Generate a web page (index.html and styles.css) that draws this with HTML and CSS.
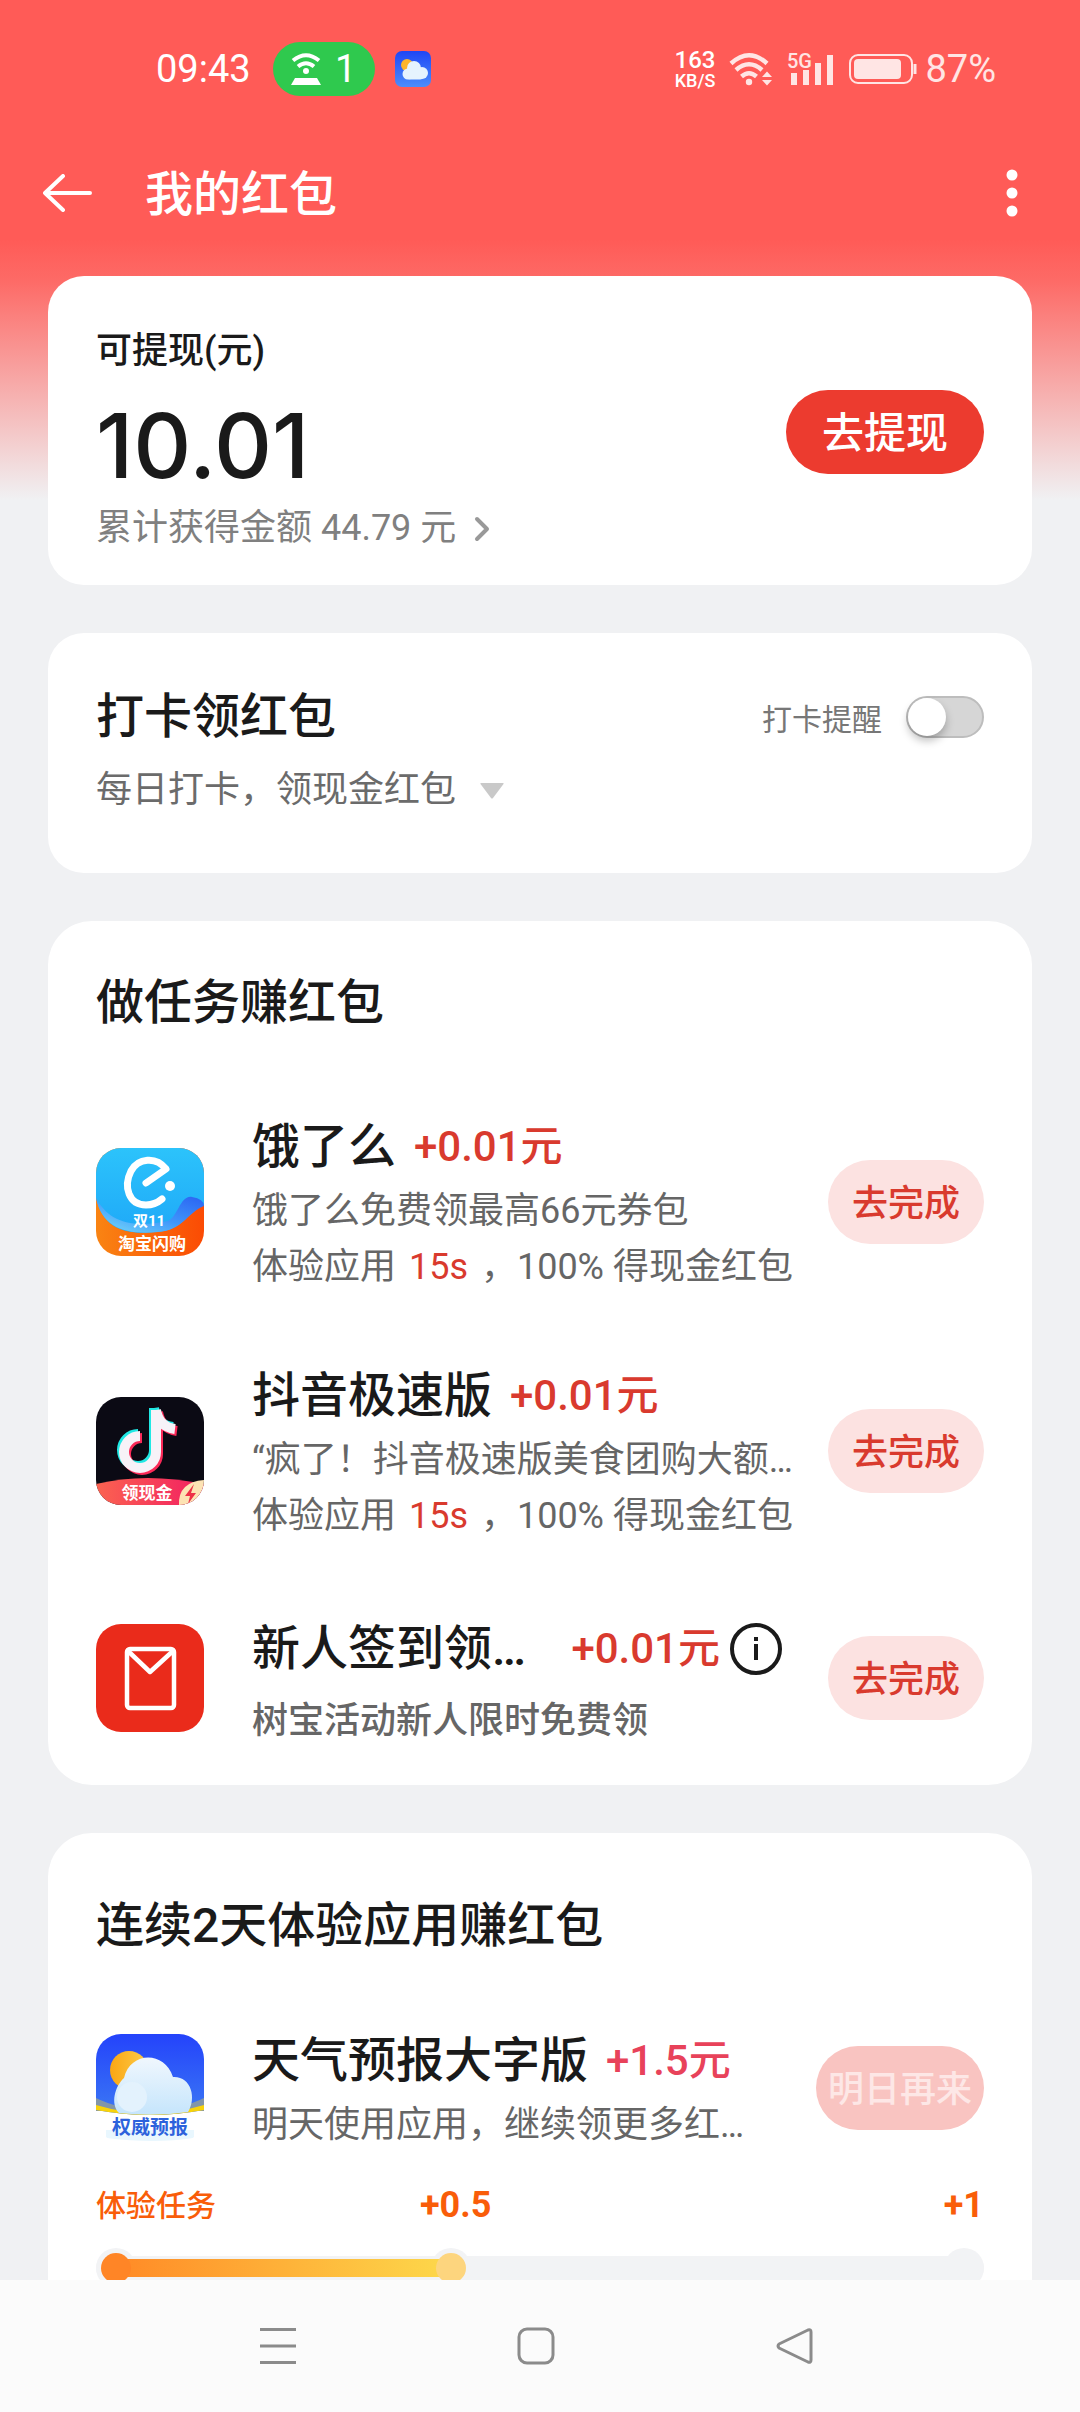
FILE: index.html
```html
<!DOCTYPE html>
<html lang="zh-CN">
<head>
<meta charset="utf-8">
<meta name="viewport" content="width=device-width, initial-scale=1">
<title>我的红包</title>
<link rel="stylesheet" href="styles.css">
</head>
<body>
<div class="screen">
  <div class="status-bar">
    <div class="status-left">
      <span class="clock">09:43</span>
      <span class="hotspot">
        <svg width="30" height="32" viewBox="0 0 30 32" fill="none" stroke="#fff" stroke-width="4">
          <path d="M2 7.500Q15-3 28 7.500M7 13.500Q15 7 23 13.500"/>
          <circle cx="15" cy="18" r="3" fill="#fff" stroke="none"/>
          <path d="M4 25h22l4 7H0z" fill="#fff" stroke="none"/>
        </svg>
        <span>1</span>
      </span>
      <svg class="mini-app" width="36" height="36" viewBox="0 0 36 36">
        <defs><linearGradient id="mini" x2="0" y2="1"><stop stop-color="#1f46f5"/><stop offset="1" stop-color="#4c8dfb"/></linearGradient></defs>
        <rect width="36" height="36" rx="7" fill="url(#mini)"/>
        <circle cx="12" cy="14" r="6" fill="#fdb52b"/>
        <g fill="#e6f3fe"><circle cx="19" cy="17" r="7"/><circle cx="13" cy="23" r="5.500"/><circle cx="27" cy="22" r="6"/><rect x="12" y="20" width="16" height="8.500" rx="3"/></g>
      </svg>
    </div>
    <div class="status-right">
      <span class="speed"><b>163</b><small>KB/S</small></span>
      <svg width="44" height="34" viewBox="0 0 44 34" fill="none" stroke="#ffe5e4" stroke-width="4.500">
        <path d="M2 11.500Q20-5 38 11.500M7 18Q20 6.500 33 18M12.500 24.500Q20 18 27.500 24.500"/>
        <circle cx="20" cy="30" r="3.200" fill="#ffe5e4" stroke="none"/>
        <path d="M33 25l5-5.500 5 5.500zM33 28h10l-5 5.500z" fill="#ffe5e4" stroke="none"/>
      </svg>
      <svg width="48" height="42" viewBox="0 0 48 42" fill="#ffe5e4">
        <text class="net" x="0" y="20">5G</text>
        <rect x="4" y="25" width="6" height="12"/><rect x="16" y="22" width="6" height="15"/><rect x="28" y="15" width="6" height="22"/><rect x="40" y="7" width="6" height="30"/>
      </svg>
      <svg width="68" height="32" viewBox="0 0 68 32" fill="none" stroke="#ffe5e4" stroke-width="2">
        <rect x="1" y="2" width="62" height="28" rx="8"/>
        <rect x="5" y="6" width="47" height="20" rx="4" fill="#ffe5e4" stroke="none"/>
        <path d="M66 11v10" stroke-width="3"/>
      </svg>
      <span class="battery">87%</span>
    </div>
  </div>

  <header class="app-bar">
    <button class="icon-button" aria-label="返回">
      <svg width="50" height="38" viewBox="0 0 50 38" fill="none" stroke="#fff" stroke-width="4" stroke-linecap="round" stroke-linejoin="round"><path d="M20 2L2 19l18 17M3 19h44"/></svg>
    </button>
    <h1 class="page-title">我的红包</h1>
    <button class="icon-button" aria-label="更多">
      <svg width="12" height="50" viewBox="0 0 12 50" fill="#fff"><circle cx="6" cy="7" r="5.500"/><circle cx="6" cy="25" r="5.500"/><circle cx="6" cy="43" r="5.500"/></svg>
    </button>
  </header>

  <main class="content">
    <section class="card balance">
      <div class="balance-info">
        <p class="balance-label">可提现(元)</p>
        <p class="balance-amount">10.01</p>
        <a class="balance-total" href="#total">累计获得金额 44.79 元
          <svg width="16" height="26" viewBox="0 0 16 26" fill="none" stroke="#999" stroke-width="4" stroke-linecap="round" stroke-linejoin="round"><path d="M3 3l10 10L3 23"/></svg>
        </a>
      </div>
      <button class="button button-primary">去提现</button>
    </section>

    <section class="card checkin">
      <div class="checkin-head">
        <h2 class="card-title">打卡领红包</h2>
        <label class="remind">打卡提醒<input class="switch" type="checkbox" role="switch"></label>
      </div>
      <p class="checkin-text">每日打卡，领现金红包
        <svg width="24" height="16" viewBox="0 0 24 16"><path d="M1 0h22q1 0 .5 1L13 15q-1 1-2 0L.5 1Q0 0 1 0z" fill="#c9c9c9"/></svg>
      </p>
    </section>

    <section class="card tasks">
      <h2 class="card-title">做任务赚红包</h2>
      <ul class="task-list">
        <li class="task">
          <svg class="task-icon" width="108" height="108" viewBox="0 0 108 108">
            <defs>
              <linearGradient id="sky" x2="0" y2="1"><stop stop-color="#2cc3fb"/><stop offset="1" stop-color="#1fa9f8"/></linearGradient>
              <linearGradient id="fold" x1="1" y1="0" x2="0" y2="1"><stop stop-color="#2b62f2"/><stop offset=".5" stop-color="#3f97fb"/><stop offset="1" stop-color="#7be0f8"/></linearGradient>
              <linearGradient id="flame" x2="1" y2="0"><stop stop-color="#f98413"/><stop offset="1" stop-color="#fb4b04"/></linearGradient>
              <clipPath id="tile"><rect width="108" height="108" rx="25"/></clipPath>
            </defs>
            <g clip-path="url(#tile)">
              <rect width="108" height="108" fill="url(#flame)"/>
              <path d="M0 0h108v57C92 62 88 83 60 84 30 87 8 82 0 50z" fill="url(#sky)"/>
              <path d="M0 50c12 22 32 31 72 23 10-4 12-26 24-24q12 2 12 9C92 64 86 83 62 84 30 87 6 80 0 50z" fill="url(#fold)"/>
              <path d="M50 35L70 21C60 8 42 10 35 23c-8 16-2 34 15 34q9 0 16-6" fill="none" stroke="#fff" stroke-width="7" stroke-linecap="round" stroke-linejoin="round"/>
              <circle cx="74" cy="38" r="5" fill="#fff"/>
              <text class="logo-text" x="53" y="78" font-size="15">双11</text>
              <text class="logo-text" x="56" y="102" font-size="17">淘宝闪购</text>
            </g>
          </svg>
          <div class="task-body">
            <div class="task-head"><h3 class="task-name">饿了么</h3><span class="reward">+0.01元</span></div>
            <p class="task-text">饿了么免费领最高66元券包</p>
            <p class="task-text">体验应用 <em>15s</em> ，100% 得现金红包</p>
          </div>
          <button class="button button-soft">去完成</button>
        </li>
        <li class="task">
          <svg class="task-icon" width="108" height="108" viewBox="0 0 108 108">
            <defs><linearGradient id="ribbon"><stop stop-color="#fb6350"/><stop offset="1" stop-color="#f21e62"/></linearGradient></defs>
            <g clip-path="url(#tile)">
              <rect width="108" height="108" fill="#0b0a14"/>
              <g fill="none" stroke-width="10">
                <path d="M58 11v42a16 16 0 1 1-16-16M58 11q3 17 19 19" stroke="#21e8e4"/>
                <path d="M62 15v42a16 16 0 1 1-16-16M62 15q3 17 19 19" stroke="#fb2958"/>
                <path d="M60 13v42a16 16 0 1 1-16-16M60 13q3 17 19 19" stroke="#f7f2f8"/>
              </g>
              <path d="M0 87Q50 75 108 87v21H0z" fill="url(#ribbon)"/>
              <path d="M83 108q-1-23 25-25v25z" fill="#fde3b4"/>
              <path d="M98 87l-9 12h5l-2 8 8-11h-5z" fill="#ee3148"/>
              <text class="logo-text" x="51" y="102" font-size="17">领现金</text>
            </g>
          </svg>
          <div class="task-body">
            <div class="task-head"><h3 class="task-name">抖音极速版</h3><span class="reward">+0.01元</span></div>
            <p class="task-text">“疯了！抖音极速版美食团购大额…</p>
            <p class="task-text">体验应用 <em>15s</em> ，100% 得现金红包</p>
          </div>
          <button class="button button-soft">去完成</button>
        </li>
        <li class="task task-compact">
          <svg class="task-icon" width="108" height="108" viewBox="0 0 108 108">
            <rect width="108" height="108" rx="25" fill="#ea2b1b"/>
            <g fill="none" stroke="#fff" stroke-width="4.500" stroke-linejoin="round"><rect x="31" y="25" width="47" height="59" rx="3"/><path d="M32 27l22 21 23-21"/></g>
          </svg>
          <div class="task-body">
            <div class="task-head">
              <h3 class="task-name">新人签到领…</h3><span class="reward">+0.01元</span>
              <button class="info" aria-label="说明">
                <svg width="52" height="52" viewBox="0 0 52 52" fill="#1a1a1a"><circle cx="26" cy="26" r="24" fill="none" stroke="#1a1a1a" stroke-width="4"/><rect x="24" y="21" width="4" height="16"/><rect x="24" y="14" width="4" height="4"/></svg>
              </button>
            </div>
            <p class="task-text">树宝活动新人限时免费领</p>
          </div>
          <button class="button button-soft">去完成</button>
        </li>
      </ul>
    </section>

    <section class="card streak">
      <h2 class="card-title">连续2天体验应用赚红包</h2>
      <div class="task">
        <svg class="task-icon" width="108" height="108" viewBox="0 0 108 108">
          <defs>
            <linearGradient id="blue" x2="0" y2="1"><stop stop-color="#2443fb"/><stop offset="1" stop-color="#3b78f4"/></linearGradient>
            <linearGradient id="cloud" x2="0" y2="1"><stop stop-color="#f0f7fd"/><stop offset="1" stop-color="#c5e5fc"/></linearGradient>
            <linearGradient id="sun"><stop stop-color="#fba613"/><stop offset="1" stop-color="#fbcc4b"/></linearGradient>
          </defs>
          <g clip-path="url(#tile)">
            <rect width="108" height="108" fill="#fff"/>
            <path d="M0 0h108v76Q54 86 0 76z" fill="url(#blue)"/>
            <path d="M0 64q20 10 54 14 34-4 54-14v13H0z" fill="#8296a8"/>
            <path d="M0 71q54 16 108 0v5q-54 10-108 0z" fill="#f8d30b"/>
            <circle cx="33" cy="36" r="19" fill="url(#sun)"/>
            <path d="M23 79C14 70 19 52 28 44 34 18 68 16 77 43 95 42 101 64 92 78q-34 5-69 1z" fill="url(#cloud)"/>
            <circle cx="36" cy="63" r="15" fill="#e3f2fd"/>
            <path d="M10 96h88v8q-40 6-88 0z" fill="#e9f7fe"/>
            <text class="logo-text logo-blue" x="54" y="100" font-size="19">权威预报</text>
          </g>
        </svg>
        <div class="task-body">
          <div class="task-head"><h3 class="task-name">天气预报大字版</h3><span class="reward reward-pink">+1.5元</span></div>
          <p class="task-text">明天使用应用，继续领更多红…</p>
        </div>
        <button class="button button-disabled" disabled>明日再来</button>
      </div>
      <div class="steps">
        <span class="step-name">体验任务</span><span class="step-mid">+0.5</span><span class="step-end">+1</span>
      </div>
      <div class="track">
        <i class="halo halo-start"></i><i class="halo halo-mid"></i><i class="halo halo-end"></i>
        <i class="fill"></i><i class="knob knob-start"></i><i class="knob knob-mid"></i>
      </div>
    </section>
  </main>

  <nav class="nav-bar">
    <button class="icon-button" aria-label="最近任务"><svg width="38" height="38" viewBox="0 0 38 38" stroke="#8b8b8b" stroke-width="3"><path d="M1 2.500h36M1 19h36M1 35.500h36"/></svg></button>
    <button class="icon-button" aria-label="主屏幕"><svg width="38" height="38" viewBox="0 0 38 38" fill="none" stroke="#8b8b8b" stroke-width="3"><rect x="2" y="2" width="34" height="34" rx="8"/></svg></button>
    <button class="icon-button" aria-label="返回上一页"><svg width="38" height="38" viewBox="0 0 38 38" fill="none" stroke="#8b8b8b" stroke-width="3" stroke-linejoin="round"><path d="M33 3L4 17q-2 2 0 4l29 14q3 1 3-2V5q0-3-3-2z"/></svg></button>
  </nav>
</div>
</body>
</html>
```
FILE: styles.css
```css
* {
  box-sizing: border-box;
  margin: 0;
  padding: 0;
}

body {
  font-family: Roboto, "Noto Sans CJK SC", sans-serif;
  color: #1a1a1a;
}

button {
  border: 0;
  background: none;
  font: inherit;
}

svg {
  display: block;
  flex: none;
}

.screen {
  display: flex;
  flex-direction: column;
  height: 100vh;
  background: linear-gradient(#ff5b57 240px, #fd6a66 280px, #f0f1f3 500px);
}

/* status bar */
.status-bar {
  display: flex;
  flex: none;
  justify-content: space-between;
  align-items: center;
  height: 138px;
  padding: 0 84px 0 156px;
  color: #fff;
  font-size: 38px;
}

.status-left,
.status-right {
  display: flex;
  align-items: center;
}

.clock {
  margin-right: 22px;
}

.hotspot {
  display: flex;
  align-items: center;
  justify-content: center;
  gap: 14px;
  width: 102px;
  height: 54px;
  margin-right: 20px;
  border-radius: 27px;
  background: #2fc94e;
}

.status-right {
  gap: 14px;
}

.speed {
  display: flex;
  flex-direction: column;
  align-items: center;
  font-weight: 500;
}

.speed b {
  font-size: 24px;
  font-weight: 500;
  line-height: 24px;
}

.speed small {
  font-size: 18px;
  line-height: 18px;
}

.net {
  font-size: 20px;
  font-weight: 500;
}

.battery {
  margin-left: -6px;
  color: #ffe5e4;
}

/* app bar */
.app-bar {
  display: flex;
  flex: none;
  align-items: center;
  height: 110px;
  padding: 0 62px 0 43px;
}

.page-title {
  flex: 1;
  margin-left: 52px;
  padding-top: 4px;
  color: #fff;
  font-size: 48px;
  font-weight: 500;
  line-height: 64px;
}

/* cards */
.content {
  display: flex;
  flex: 1;
  flex-direction: column;
  gap: 48px;
  min-height: 0;
  padding: 28px 48px 0;
  overflow: auto;
  scrollbar-width: none;
}

.card {
  flex: none;
  padding: 0 48px;
  border-radius: 36px;
  background: #fff;
}

.card-title {
  font-size: 48px;
  font-weight: 500;
  line-height: 64px;
}

.button {
  flex: none;
  height: 84px;
  padding-bottom: 4px;
  border-radius: 42px;
  font-size: 36px;
  font-weight: 500;
  text-align: center;
}

.button-primary {
  width: 198px;
  background: #ec3b2f;
  color: #fff;
  font-size: 42px;
}

.button-soft {
  width: 156px;
  background: #fce2e1;
  color: #d93a2e;
}

.button-disabled {
  width: 168px;
  background: #f9c4c1;
  color: #fde7e6;
}

.balance {
  display: flex;
  align-items: center;
  justify-content: space-between;
  padding: 36px 48px 34px;
}

.balance-label {
  font-size: 36px;
  font-weight: 500;
  line-height: 78px;
}

.balance-amount {
  margin: 8px 0 12px;
  font-family: Inter, Roboto, sans-serif;
  font-size: 90px;
  font-weight: 500;
  line-height: 96px;
}

.balance-total {
  display: flex;
  align-items: center;
  gap: 18px;
  color: #808080;
  font-size: 36px;
  line-height: 45px;
  text-decoration: none;
}

.checkin {
  padding-top: 52px;
  padding-bottom: 60px;
}

.checkin-head {
  display: flex;
  align-items: center;
  justify-content: space-between;
}

.remind {
  display: flex;
  align-items: center;
  gap: 24px;
  color: #777;
  font-size: 30px;
}

.switch {
  appearance: none;
  display: flex;
  width: 78px;
  height: 42px;
  border: 2px solid #bdbdbd;
  border-radius: 21px;
  background: #d6d6d6;
}

.switch::before {
  content: "";
  width: 38px;
  height: 38px;
  border-radius: 50%;
  background: #fff;
  box-shadow: 0 5px 8px rgba(0, 0, 0, 0.25);
}

.switch:checked {
  justify-content: flex-end;
  background: #ec3b2f;
}

.checkin-text {
  display: flex;
  align-items: center;
  gap: 24px;
  margin-top: 19px;
  color: #6b6b6b;
  font-size: 36px;
  line-height: 45px;
}

/* tasks */
.tasks,
.streak {
  border-radius: 44px;
}

.tasks {
  padding-top: 50px;
  padding-bottom: 36px;
}

.task-list {
  display: flex;
  flex-direction: column;
  gap: 63px;
  margin-top: 74px;
  list-style: none;
}

.task {
  display: flex;
  align-items: center;
}

.task-body {
  flex: 1;
  min-width: 0;
  margin: 0 36px 0 48px;
  padding-top: 6px;
  white-space: nowrap;
}

.task-head {
  display: flex;
  align-items: center;
  gap: 18px;
  margin-bottom: 4px;
}

.task-name {
  font-size: 48px;
  font-weight: 500;
  line-height: 64px;
}

.reward {
  color: #d93a2e;
  font-size: 42px;
  font-weight: 500;
  line-height: 64px;
}

.reward-pink {
  color: #e8425a;
}

.task-text {
  color: #666;
  font-size: 36px;
  line-height: 56px;
}

.task-text em {
  margin: 0 4px;
  color: #d93a2e;
  font-style: normal;
}

.task-compact .task-body {
  padding-top: 10px;
}

.task-compact .task-head {
  gap: 10px;
  padding-right: 10px;
}

.task-compact .task-name {
  flex: 1;
}

.task-compact .task-text {
  padding-top: 8px;
  font-weight: 500;
}

.logo-text {
  fill: #fff;
  font-weight: 700;
  text-anchor: middle;
}

.logo-blue {
  fill: #2d62dc;
}

/* streak */
.streak {
  padding-top: 61px;
  padding-bottom: 60px;
}

.streak .task {
  margin-top: 65px;
}

.steps {
  display: grid;
  grid-template-columns: 30% 21% 1fr;
  align-items: center;
  margin-top: 30px;
  color: #f95d09;
  font-size: 36px;
  font-weight: 700;
  line-height: 45px;
}

.step-name {
  font-size: 30px;
  font-weight: 500;
}

.step-mid {
  text-align: center;
}

.step-end {
  text-align: right;
}

.track {
  position: relative;
  height: 24px;
  margin-top: 28px;
  border-radius: 12px;
  background: #f2f3f5;
}

.halo,
.knob,
.fill {
  position: absolute;
  top: 50%;
  transform: translateY(-50%);
}

.halo {
  width: 40px;
  height: 40px;
  border-radius: 50%;
  background: #f2f3f5;
}

.halo-start {
  left: 0;
}

.halo-mid {
  left: calc(40% - 20px);
}

.halo-end {
  right: 0;
}

.fill {
  left: 20px;
  width: calc(40% - 20px);
  height: 18px;
  background: linear-gradient(90deg, #ff8a26, #fdd94b);
}

.knob {
  width: 30px;
  height: 30px;
  border-radius: 50%;
}

.knob-start {
  left: 5px;
  background: #ff8526;
}

.knob-mid {
  left: calc(40% - 15px);
  background: #fdd57e;
}

/* system navigation */
.nav-bar {
  display: flex;
  flex: none;
  align-items: center;
  justify-content: center;
  gap: 220px;
  height: 132px;
  padding-right: 8px;
  background: #fbfbfb;
}
```
